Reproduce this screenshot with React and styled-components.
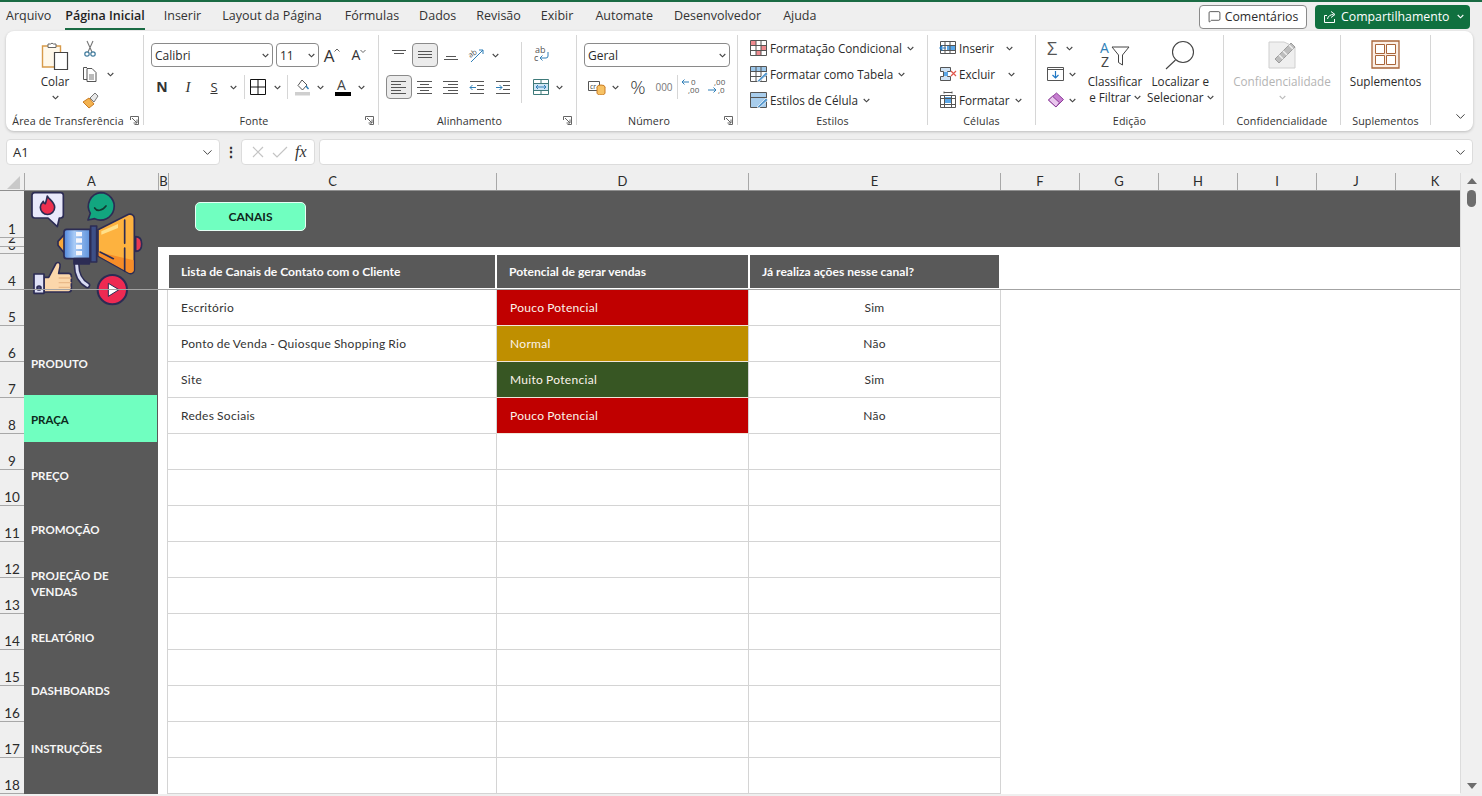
import React from 'react';
import styled, { createGlobalStyle } from 'styled-components';
import { MessageSquare, ChevronDown } from 'lucide-react';

const UI_FONT = '"Open Sans", "Noto Sans", sans-serif';
const CELL_FONT = 'Lato, "Open Sans", sans-serif';
const DARK = '#595959';

const GlobalStyle = createGlobalStyle`
  html, body { margin: 0; padding: 0; overflow: hidden; }
  body { background: #efefef; font-family: ${UI_FONT}; color: #2b2b2b; }
`;

const Page = styled.div`
  width: 1482px;
  height: 796px;
  overflow: hidden;
  border-top: 2px solid #1a6b44;
  box-sizing: border-box;
  background: #efefef;
`;

/* ---------- abas ---------- */
const TabBar = styled.div`
  height: 29px;
  display: flex;
  align-items: center;
  padding: 0 12px 0 6px;
`;
const Tab = styled.div`
  font-size: 12.5px;
  line-height: 24px;
  margin-right: ${(p) => p.$gap}px;
  color: ${(p) => (p.$active ? '#1f1f1f' : '#333')};
  font-weight: ${(p) => (p.$active ? 600 : 400)};
  border-bottom: 2px solid ${(p) => (p.$active ? '#1a6b44' : 'transparent')};
  white-space: nowrap;
`;
const TabActions = styled.div`
  margin-left: auto;
  display: flex;
  gap: 8px;
`;
const CommentButton = styled.div`
  width: 108px;
  height: 24px;
  box-sizing: border-box;
  border: 1px solid #8a8a8a;
  border-radius: 4px;
  background: #fff;
  display: flex;
  align-items: center;
  justify-content: center;
  gap: 4px;
  font-size: 12.3px;
`;
const ShareButton = styled.div`
  width: 155px;
  height: 24px;
  border-radius: 4px;
  background: #10703f;
  color: #fff;
  display: flex;
  align-items: center;
  justify-content: space-between;
  padding: 0 6px 0 8px;
  box-sizing: border-box;
  font-size: 12.3px;
`;
const ShareLabel = styled.span`
  display: flex;
  align-items: center;
  gap: 4px;
`;

/* ---------- faixa de opções ---------- */
const Ribbon = styled.div`
  margin: 0 9px 0 6px;
  height: 100px;
  box-sizing: border-box;
  padding: 4px 0 6px;
  background: #fff;
  border-radius: 8px;
  box-shadow: 0 1px 3px rgba(0, 0, 0, 0.22);
  display: flex;
  font-size: 11.7px;
`;
const Group = styled.div`
  position: relative;
  flex: 0 0 ${(p) => p.$w}px;
  box-sizing: border-box;
  border-right: ${(p) => (p.$last ? 'none' : '1px solid #d6d6d6')};
  display: flex;
  flex-direction: column;
`;
const GroupBody = styled.div`
  flex: 0 0 ${(p) => p.$h || 78}px;
  box-sizing: border-box;
  padding: ${(p) => p.$pt || 0}px 0 0 ${(p) => p.$pl || 0}px;
  display: flex;
  flex-direction: ${(p) => p.$dir || 'row'};
`;
const Caption = styled.div`
  font-size: 10.7px;
  line-height: 16px;
  text-align: center;
  color: #333;
  padding: 0 ${(p) => p.$pr || 0}px 0 ${(p) => p.$pl || 0}px;
  white-space: nowrap;
  letter-spacing: 0.1px;
`;
const Launcher = styled.svg`
  position: absolute;
  right: 4px;
  bottom: 0;
  width: 9px;
  height: 9px;
`;
const Row = styled.div`
  display: flex;
  align-items: center;
  height: ${(p) => p.$h || 32}px;
  padding-left: ${(p) => p.$pl || 0}px;
`;
const Stack = styled.div`
  display: flex;
  flex-direction: column;
  flex: 0 0 ${(p) => (p.$w ? `${p.$w}px` : 'auto')};
  margin-left: ${(p) => p.$ml || 0}px;
`;
const Cell = styled.div`
  flex: 0 0 ${(p) => p.$w}px;
  height: 24px;
  margin-left: ${(p) => p.$ml || 0}px;
  box-sizing: border-box;
  display: flex;
  align-items: center;
  justify-content: center;
  border-radius: 4px;
  ${(p) => p.$pressed && 'background: #ebebeb; border: 1px solid #8a8a8a;'}
`;
const VRule = styled.div`
  flex: 0 0 1px;
  align-self: ${(p) => (p.$full ? 'stretch' : 'center')};
  height: ${(p) => (p.$full ? 'auto' : '24px')};
  margin: ${(p) => (p.$full ? '3px 0 10px' : `0 0 0 ${p.$ml || 0}px`)};
  background: #d6d6d6;
`;
const Select = styled.div`
  flex: 0 0 ${(p) => p.$w}px;
  height: 24px;
  margin-left: ${(p) => p.$ml || 0}px;
  box-sizing: border-box;
  border: 1px solid #8a8a8a;
  border-radius: 4px;
  display: flex;
  align-items: center;
  justify-content: space-between;
  padding: 0 3px;
  font-size: 12px;
`;
const Tall = styled.div`
  flex: 0 0 ${(p) => p.$w}px;
  display: flex;
  flex-direction: column;
  align-items: center;
  color: ${(p) => (p.$muted ? '#b4b4b4' : '#2b2b2b')};
`;
const TallIcon = styled.div`
  height: 38px;
  box-sizing: border-box;
  padding-top: ${(p) => p.$pt || 5}px;
  display: flex;
  align-items: flex-start;
  justify-content: center;
`;
const TallLine = styled.div`
  line-height: 16px;
  height: 16px;
  display: flex;
  align-items: center;
  gap: 3px;
  white-space: nowrap;
`;
const ListRow = styled.div`
  display: flex;
  align-items: center;
  height: 26px;
  gap: 2px;
  white-space: nowrap;
`;
const ChevGap = styled.span`
  display: flex;
  margin-left: ${(p) => p.$ml}px;
`;
const Glyph = styled.span`
  font-family: ${(p) => p.$family || UI_FONT};
  font-size: ${(p) => p.$size || 14}px;
  font-weight: ${(p) => p.$weight || 400};
  font-style: ${(p) => (p.$italic ? 'italic' : 'normal')};
  text-decoration: ${(p) => (p.$under ? 'underline' : 'none')};
  color: ${(p) => p.$color || '#333'};
  line-height: 1;
`;
const CaretGlyph = styled.span`
  position: relative;
  display: inline-flex;
  padding-right: 6px;
  & > svg {
    position: absolute;
    right: 0;
    top: 1px;
  }
`;

/* ---------- barra de fórmulas ---------- */
const FormulaBar = styled.div`
  margin-top: 8px;
  height: 26px;
  padding: 0 9px 0 6px;
  display: flex;
  align-items: center;
`;
const FormulaBox = styled.div`
  flex: ${(p) => (p.$w ? `0 0 ${p.$w}px` : '1')};
  height: 26px;
  margin-left: ${(p) => p.$ml || 0}px;
  box-sizing: border-box;
  background: #fff;
  border: 1px solid #dcdcdc;
  border-radius: 4px;
  display: flex;
  align-items: center;
  justify-content: ${(p) => p.$justify || 'space-between'};
  padding: 0 4px 0 6px;
  font-size: 13px;
`;
const Kebab = styled.div`
  flex: 0 0 21px;
  text-align: center;
  font-size: 14px;
  font-weight: 700;
  line-height: 26px;
`;

/* ---------- planilha ---------- */
const Workbook = styled.div`
  margin-top: 8px;
  display: flex;
`;
const SheetArea = styled.div`
  width: 1460px;
  flex: none;
`;
const ColHeaders = styled.div`
  display: flex;
  height: 17px;
  box-sizing: border-box;
  overflow: hidden;
`;
const Corner = styled.div`
  flex: 0 0 24px;
  display: flex;
  align-items: flex-end;
  justify-content: flex-end;
  padding: 0 4px 1px 0;
  box-sizing: border-box;
`;
const ColHead = styled.div`
  flex: 0 0 ${(p) => p.$w}px;
  box-sizing: border-box;
  border-left: 1px solid #a8a8a8;
  font-family: ${CELL_FONT};
  font-size: 13px;
  line-height: 17px;
  text-align: center;
  color: #2b2b2b;
  overflow: hidden;
`;
const SheetBody = styled.div`
  position: relative;
  display: flex;
  height: 603px;
  overflow: hidden;
  border-top: 1px solid #8f8f8f;
  &::after {
    content: '';
    position: absolute;
    left: 0;
    right: 0;
    top: 98px;
    height: 1px;
    background: #a3a3a3;
    z-index: 3;
  }
`;
const RowHeads = styled.div`
  flex: 0 0 24px;
  display: flex;
  flex-direction: column;
`;
const RowHead = styled.div`
  flex: 0 0 ${(p) => p.$h}px;
  box-sizing: border-box;
  border-bottom: 1px solid #a8a8a8;
  font-family: ${CELL_FONT};
  font-size: 13.5px;
  line-height: 16px;
  color: #2b2b2b;
  display: flex;
  align-items: flex-end;
  justify-content: center;
  overflow: hidden;
`;
const Canvas = styled.div`
  position: relative;
  flex: 1;
  display: flex;
  flex-direction: column;
`;
const Band = styled.div`
  flex: 0 0 56px;
  background: ${DARK};
  display: flex;
  align-items: center;
  padding: 0 0 6px 171px;
  box-sizing: border-box;
`;
const CanaisButton = styled.div`
  width: 111px;
  height: 29px;
  box-sizing: border-box;
  background: #70ffc0;
  border: 1px solid #e6fff5;
  border-radius: 5px;
  color: #10261c;
  font-family: ${CELL_FONT};
  font-size: 12px;
  font-weight: 700;
  display: flex;
  align-items: center;
  justify-content: center;
`;
const LogoArt = styled.svg`
  position: absolute;
  left: 0;
  top: -3px;
  z-index: 2;
`;
const Lower = styled.div`
  flex: 1;
  display: flex;
  min-height: 0;
`;
const Sidebar = styled.div`
  flex: 0 0 134px;
  background: ${DARK};
  padding-top: 92px;
  box-sizing: border-box;
`;
const NavItem = styled.div`
  height: 47px;
  width: 133px;
  margin-top: ${(p) => p.$gap}px;
  padding: 3px 7px 0;
  box-sizing: border-box;
  display: flex;
  align-items: center;
  background: ${(p) => (p.$active ? '#70ffc0' : 'transparent')};
  color: ${(p) => (p.$active ? '#0c2a1c' : '#f6f6f6')};
  font-family: ${CELL_FONT};
  font-size: 11.5px;
  line-height: 16px;
  font-weight: 700;
`;
const Main = styled.div`
  flex: 1;
  background: #fff;
  padding: 8px 0 0 9px;
`;
const TableHead = styled.div`
  display: grid;
  grid-template-columns: 329px 252px 252px;
  width: 833px;
  height: 35px;
`;
const HeadCell = styled.div`
  height: 33px;
  margin: 0 ${(p) => p.$mr}px 0 ${(p) => p.$ml}px;
  background: ${DARK};
  color: #fbfbfb;
  font-family: ${CELL_FONT};
  font-size: 12.1px;
  font-weight: 700;
  padding-left: 12px;
  display: flex;
  align-items: center;
  white-space: nowrap;
`;
const TableBody = styled.div`
  display: grid;
  grid-template-columns: 329px 252px 252px;
  grid-auto-rows: 36px;
  width: 834px;
  border-right: 1px solid #d4d4d4;
  box-sizing: border-box;
`;
const BodyCell = styled.div`
  box-sizing: border-box;
  border-left: 1px solid #d4d4d4;
  border-bottom: 1px solid ${(p) => (p.$fill ? '#f0e6d8' : '#d4d4d4')};
  background: ${(p) => p.$fill || '#fff'};
  color: ${(p) => (p.$fill ? '#fbf3ea' : '#333')};
  font-family: ${CELL_FONT};
  font-size: 12px;
  letter-spacing: 0.3px;
  word-spacing: -0.5px;
  padding-left: ${(p) => (p.$center ? 0 : 13)}px;
  display: flex;
  align-items: center;
  justify-content: ${(p) => (p.$center ? 'center' : 'flex-start')};
  white-space: nowrap;
`;
const Scrollbar = styled.div`
  flex: 0 0 22px;
  height: 620px;
  border-left: 1px solid #dcdcdc;
  box-sizing: border-box;
  background: #f0f0f0;
  display: flex;
  flex-direction: column;
  align-items: center;
  padding: 4px 0 3px 0;
`;
const ScrollThumb = styled.div`
  width: 9px;
  height: 17px;
  margin-top: 5px;
  border-radius: 5px;
  background: #6d6d6d;
`;
const ScrollDown = styled.div`
  margin-top: auto;
  display: flex;
`;

/* ---------- ícones ---------- */
const Chev = ({ color = '#444' }) => (
  <svg width="7" height="5" viewBox="0 0 7 5"><path d="M.7 1l2.8 2.8L6.3 1" fill="none" stroke={color} strokeWidth="1.1" /></svg>
);
const Svg = ({ w = 18, h = 18, children }) => (
  <svg width={w} height={h} viewBox={`0 0 ${w} ${h}`} fill="none">{children}</svg>
);
const Caret = ({ up }) => (
  <svg width="6" height="4" viewBox="0 0 6 4"><path d={up ? 'M.5 3.500L3 1l2.500 2.500' : 'M.5 1L3 3.500 5.500 1'} fill="none" stroke="#666" /></svg>
);

const PasteIcon = () => (
  <Svg w={30} h={31}>
    <path d="M2.500 6h18v21h-18z" fill="#fff8ea" stroke="#d79a4a" strokeWidth="1.400" />
    <path d="M8 6V4h2.500a2 2 0 0 1 3 0H16v3.500H8z" fill="#fff" stroke="#666" />
    <path d="M14.500 12.500h13v17h-13z" fill="#fff" stroke="#444" strokeWidth="1.200" />
  </Svg>
);
const ScissorsIcon = () => (
  <Svg>
    <path d="M6 2l5 11M12 2L7 13" stroke="#777" strokeWidth="1.100" />
    <circle cx="6" cy="15" r="2.200" stroke="#3f7a9c" strokeWidth="1.200" />
    <circle cx="12" cy="15" r="2.200" stroke="#3f7a9c" strokeWidth="1.200" />
  </Svg>
);
const CopyIcon = () => (
  <Svg>
    <path d="M6 2.500H2.500v12H6" stroke="#555" />
    <path d="M6 3.500h5l4 4v9H6z" fill="#fff" stroke="#555" />
    <path d="M8 10h5M8 12h5M8 14h5" stroke="#777" />
  </Svg>
);
const BrushIcon = () => (
  <Svg>
    <path d="M2 11l6-4 5 6-5 4z" fill="#f3b24f" stroke="#c97b22" />
    <path d="M9 7l5-5 3 3-4 6z" fill="#e8e8e8" stroke="#777" />
  </Svg>
);
const BordersIcon = () => (
  <Svg w={16} h={16}>
    <path d="M.5.5h15v15H.5zM8 .5v15M.5 8h15" stroke="#111" />
  </Svg>
);
const FillIcon = () => (
  <Svg w={17} h={17}>
    <path d="M8 1l5 5-4.500 5L4 6.500z" stroke="#555" fill="#fff" />
    <path d="M12 7l2.500 3" stroke="#2f7fb8" strokeWidth="1.400" />
    <path d="M1 13h15v3.500H1z" fill="#cfcfcf" />
  </Svg>
);
const AlignIcon = ({ lines, color = '#555', w = 16 }) => (
  <Svg w={w} h={16}>
    {lines.map(([x, y, len], i) => (
      <path key={i} d={`M${x} ${y}.5h${len}`} stroke={color} />
    ))}
  </Svg>
);
const IndentIcon = ({ out }) => (
  <Svg w={16} h={16}>
    <path d="M1 2.500h14M8 6.500h7M8 10.500h7M1 14.500h14" stroke="#555" />
    <path d={out ? 'M7 8.500H1m2.500-2.500L1 8.500 3.500 11' : 'M1 8.500h6M4.500 6L7 8.500 4.500 11'} stroke="#2f7fb8" />
  </Svg>
);
const OrientationIcon = () => (
  <Svg w={18} h={16}>
    <text x="1" y="9" fontSize="7.500" fill="#555" fontFamily="Open Sans" transform="rotate(-35 5 8)">ab</text>
    <path d="M3 15L15 3m-4 0h4v4" stroke="#2f7fb8" />
  </Svg>
);
const WrapIcon = () => (
  <Svg w={18} h={20}>
    <text x="3" y="8" fontSize="9" fill="#555" fontFamily="Open Sans">ab</text>
    <text x="2" y="16" fontSize="9" fill="#555" fontFamily="Open Sans">c</text>
    <path d="M16 7v4a2 2 0 0 1-2 2H8m2.500-2.500L8 13l2.500 2.500" stroke="#2f7fb8" />
  </Svg>
);
const MergeIcon = () => (
  <Svg w={16} h={16}>
    <path d="M.5.5h15v15H.5zM.5 4.500h15M.5 11.500h15M8 .5v4M8 11.500v4" stroke="#3f7a7a" />
    <path d="M1 5h14v6H1z" fill="#cfe6f5" />
    <path d="M3 8h10M5 6L3 8l2 2M11 6l2 2-2 2" stroke="#2f7fb8" />
  </Svg>
);
const AccountingIcon = () => (
  <Svg w={18} h={16}>
    <path d="M.5 2.500h11v9H.5z" stroke="#555" />
    <text x="2" y="9.500" fontSize="7" fill="#444" fontFamily="Open Sans">cr</text>
    <ellipse cx="13" cy="8" rx="4" ry="2" fill="#f7c264" stroke="#c97b22" />
    <path d="M9 8v6c0 2.600 8 2.600 8 0V8" fill="#f7c264" stroke="#c97b22" />
  </Svg>
);
const DecimalIcon = ({ more }) => (
  <Svg w={22} h={20}>
    <text x={more ? 11 : 8} y="8" fontSize="8" fill="#555" fontFamily="Open Sans">{more ? '0' : ',00'}</text>
    <text x={more ? 8 : 12} y="16" fontSize="8" fill="#555" fontFamily="Open Sans">{more ? ',00' : ',0'}</text>
    <path d={more ? 'M9 5H2m2.500-2.500L2 5l2.500 2.500' : 'M2 13h8M7.500 10.500L10 13l-2.500 2.500'} stroke="#2f7fb8" />
  </Svg>
);
const CondIcon = () => (
  <Svg>
    <path d="M1 2h5v5H1zM6 12h5v4H6z" fill="#ee8a8f" />
    <path d="M11 7h5v5h-5z" fill="#ee8a8f" />
    <path d="M.5 1.500h16v15H.5zM.5 6.500h16M.5 11.500h16M6 1.500v15M11 1.500v15" stroke="#555" />
  </Svg>
);
const TableFmtIcon = () => (
  <Svg>
    <path d="M1 2h15v4H1z" fill="#9cc7ea" />
    <path d="M.5 1.500h16v15H.5zM.5 6.500h16M.5 11.500h16M6 1.500v15M11 1.500v15" stroke="#555" />
    <path d="M7 16l9-9 2 2-9 8z" fill="#5a9bd0" stroke="#fff" strokeWidth=".7" />
  </Svg>
);
const CellStyleIcon = () => (
  <Svg>
    <path d="M1 2h15v14H1z" fill="#a8cdec" />
    <path d="M.5 1.500h16v15H.5zM.5 6.500h16" stroke="#555" />
    <path d="M7 16l9-9 2 2-9 8z" fill="#5a9bd0" stroke="#fff" strokeWidth=".7" />
  </Svg>
);
const InsertIcon = () => (
  <Svg>
    <path d="M8 6h8v6H8z" fill="#5aa7e8" />
    <path d="M1.500 2.500h15v12h-15zM1.500 6.500h15M1.500 11.500h15M6 2.500v12M11 2.500v12" stroke="#555" />
    <path d="M7 9H1m2.500-2.500L1 9l2.500 2.500" stroke="#1f77c4" strokeWidth="1.200" />
  </Svg>
);
const DeleteIcon = () => (
  <Svg>
    <path d="M1.500 2.500h10v4h-3v5h3v4h-10v-4h3v-5h-3z" fill="#cfe3f5" stroke="#555" />
    <path d="M5 7h4v4H5z" fill="#5aa7e8" />
    <path d="M12 6l5 5M17 6l-5 5" stroke="#e2574c" strokeWidth="1.200" />
  </Svg>
);
const FormatCellIcon = () => (
  <Svg>
    <path d="M5 6h8v6H5z" fill="#5aa7e8" />
    <path d="M1.500 4.500h15v12h-15zM1.500 7.500h15M1.500 13.500h15M5.500 4.500v12M12.500 4.500v12" stroke="#555" />
    <path d="M5 1.500h8M5 .5v2M13 .5v2" stroke="#555" />
  </Svg>
);
const FillDownIcon = () => (
  <Svg w={18} h={16}>
    <path d="M.5 1.500h16v13H.5zM.5 3.500h16" stroke="#555" />
    <path d="M8.500 5v7M5.500 9l3 3 3-3" stroke="#1f77c4" strokeWidth="1.200" />
  </Svg>
);
const EraserIcon = () => (
  <Svg w={18} h={16}>
    <path d="M9.500 1l7 6.500-7.500 7.500L1.500 8z" fill="#c77fd0" stroke="#8c3d99" />
    <path d="M5.500 4.200l7 6.500L9 15 1.500 8z" fill="#e9c7ed" stroke="#8c3d99" />
  </Svg>
);
const SortIcon = () => (
  <Svg w={32} h={32}>
    <text x="1" y="13" fontSize="14" fill="#2f7fb8" fontFamily="Open Sans">A</text>
    <text x="2" y="27" fontSize="14" fill="#444" fontFamily="Open Sans">Z</text>
    <path d="M13 7h17l-6.500 8v10l-4-2.500V15z" fill="#fff" stroke="#444" />
  </Svg>
);
const FindIcon = () => (
  <Svg w={32} h={30}>
    <circle cx="19" cy="12" r="10.500" stroke="#444" strokeWidth="1.100" />
    <path d="M11.500 20L2 29" stroke="#444" strokeWidth="1.100" />
  </Svg>
);
const ConfidentialIcon = () => (
  <Svg w={30} h={30}>
    <path d="M2 2h15l11 5v21H2z" fill="#efefef" stroke="#cfcfcf" />
    <path d="M8 19L24 3l4 4-16 16z" fill="#bdbdbd" stroke="#9d9d9d" />
    <path d="M12 15l4 4M16 11l4 4M22 5l4 4" stroke="#eee" strokeWidth="1.500" />
  </Svg>
);
const AddinsIcon = () => (
  <Svg w={30} h={30}>
    <path d="M1 1h27v27H1z" fill="#fbefe6" stroke="#a9653a" strokeWidth="1.300" />
    <path d="M4.500 4.500h9v9h-9zM15.500 4.500h9v9h-9zM4.500 15.500h9v9h-9zM15.500 15.500h9v9h-9z" fill="#fff" stroke="#a9653a" />
  </Svg>
);
const ShareIcon = () => (
  <Svg w={14} h={14}>
    <path d="M4 5.500H1.500v7h10V9" stroke="#fff" />
    <path d="M4.500 9c.5-3 3-4.500 6-4.500M8 1.500l4 3-4 3" stroke="#fff" />
  </Svg>
);
const FontColorMark = () => (
  <Svg w={18} h={18}>
    <text x="3" y="12" fontSize="14" fill="#444" fontFamily="Open Sans">A</text>
    <path d="M1 14h16v4H1z" fill="#000" />
  </Svg>
);
const LauncherMark = () => (
  <Launcher viewBox="0 0 9 9" fill="none">
    <path d="M.5 4V.5H8.500V8.500H4.500" stroke="#666" />
    <path d="M2 2l5 5M7 3.500V7H3.500" stroke="#666" />
  </Launcher>
);
const LogoImage = () => (
  <LogoArt width="136" height="122" viewBox="0 0 408 366">
    <defs>
      <linearGradient id="logoBody" x1="0" x2="1" y1="0" y2="0">
        <stop offset="0" stopColor="#4f86dc" />
        <stop offset="0.4" stopColor="#a9cbf6" />
        <stop offset="1" stopColor="#5f93dc" />
      </linearGradient>
    </defs>
    <g stroke="#2c2c54" strokeWidth="5" strokeLinejoin="round" strokeLinecap="round">
      <path d="M32 14h78a8 8 0 0 1 8 8v60a8 8 0 0 1-8 8h-4l-6 26-28-26H32a8 8 0 0 1-8-8V22a8 8 0 0 1 8-8z" fill="#e9e9fb" />
      <path d="M70 24c4 10 22 18 22 34a21 21 0 0 1-43 0c0-9 5-14 9-18 1 5 3 7 6 7 3-7 4-14 6-23z" fill="#ee2f4f" />
      <path d="M230 14a41 41 0 1 1-18 78l-20 4 7-20a41 41 0 0 1 31-62z" fill="#12a67f" />
      <path d="M212 60c6 10 22 10 34-6" fill="none" stroke="#123c33" />
      <path d="M335 146c14 0 18 12 18 22s-4 22-18 22z" fill="#e93a55" />
      <path d="M222 125l92-46c8-3 17 3 17 12v155c0 8-8 13-16 10l-93-52z" fill="#fdb23f" />
      <path d="M224 192l105 25v30c0 6-8 10-15 7l-90-50z" fill="#f78d28" stroke="none" />
      <path d="M302 96v70M302 180v70M228 192l40 20" fill="none" />
      <path d="M158 230c0 30 12 50 32 62" fill="none" stroke="#2c2c54" strokeWidth="18" />
      <path d="M158 230c0 30 12 50 32 62" fill="none" stroke="#d9dcf3" strokeWidth="9" />
      <path d="M128 132l-26 28v12l26 32z" fill="#f9a93a" />
      <path d="M128 124h70v88h-70a8 8 0 0 1-8-8v-72a8 8 0 0 1 8-8z" fill="url(#logoBody)" />
      <path d="M150 212h46v16h-46z" fill="#2c2c54" />
      <path d="M200 114h18v108h-18z" fill="#3d4f86" />
    </g>
    <path d="M156 132h18v13h-18zM156 151h18v13h-18zM156 170h18v13h-18zM156 189h18v13h-18z" fill="#f5f5fb" />
    <path d="M232 130l50-22v12l-50 20z" fill="#ffe08a" />
    <g stroke="#2c2c54" strokeWidth="5" strokeLinejoin="round">
      <path d="M60 268h14l22-42c8-6 14 0 12 10l-4 20h30a8 8 0 0 1 8 8v40a8 8 0 0 1-8 8H74H60z" fill="#fbd7ab" />
      <path d="M30 258h30v58H30z" fill="#dfe1f6" />
      <circle cx="45" cy="300" r="6" fill="#4a4a7c" />
    </g>
    <path d="M104 270h38M104 284h38M104 298h36" stroke="#e9b989" strokeWidth="4" />
    <circle cx="265" cy="305" r="44" fill="#ee2a52" stroke="#2c2c54" strokeWidth="6" />
    <path d="M253 286l32 19-32 20z" fill="#fff" stroke="#2c2c54" strokeWidth="3" strokeLinejoin="round" />
  </LogoArt>
);

/* ---------- dados ---------- */
const tabs = [
  ['Arquivo', 14], ['Página Inicial', 19, true], ['Inserir', 21], ['Layout da Página', 23], ['Fórmulas', 20],
  ['Dados', 20], ['Revisão', 20], ['Exibir', 22], ['Automate', 21], ['Desenvolvedor', 22], ['Ajuda', 0],
];
const columns = [['A', 134], ['B', 10], ['C', 328], ['D', 252], ['E', 252], ['F', 79], ['G', 79], ['H', 79], ['I', 79], ['J', 79], ['K', 79]];
const rowHeights = [47, 9, 7, 36, ...Array(14).fill(36)];
const navItems = [
  ['PRODUTO', 0], ['PRAÇA', 9, true], ['PREÇO', 9], ['PROMOÇÃO', 7], ['PROJEÇÃO DE VENDAS', 7],
  ['RELATÓRIO', 7], ['DASHBOARDS', 6], ['INSTRUÇÕES', 11],
];
const rows = [
  ['Escritório', 'Pouco Potencial', '#c00000', 'Sim'],
  ['Ponto de Venda - Quiosque Shopping Rio', 'Normal', '#bf8f00', 'Não'],
  ['Site', 'Muito Potencial', '#375623', 'Sim'],
  ['Redes Sociais', 'Pouco Potencial', '#c00000', 'Não'],
  ...Array(10).fill(['', '', '', '']),
];
const alignLines = {
  top: [[1, 3, 14], [3, 6, 10]],
  middle: [[1, 4, 14], [1, 7, 14], [1, 10, 14]],
  bottom: [[3, 9, 10], [1, 12, 14]],
  left: [[0, 2, 15], [0, 5, 10], [0, 8, 15], [0, 11, 10], [0, 14, 15]],
  center: [[0, 2, 15], [3, 5, 9], [0, 8, 15], [3, 11, 9], [0, 14, 15]],
  right: [[0, 2, 15], [5, 5, 10], [0, 8, 15], [5, 11, 10], [0, 14, 15]],
};

function RibbonBar() {
  return (
    <Ribbon>
      <Group $w={138}>
        <GroupBody $pl={27}>
          <Tall $w={44}>
            <TallIcon><PasteIcon /></TallIcon>
            <TallLine>Colar</TallLine>
            <TallLine><Chev /></TallLine>
          </Tall>
          <Stack $ml={4}>
            <ListRow><ScissorsIcon /></ListRow>
            <ListRow><CopyIcon /><ChevGap $ml={6}><Chev /></ChevGap></ListRow>
            <ListRow><BrushIcon /></ListRow>
          </Stack>
        </GroupBody>
        <Caption $pr={13}>Área de Transferência</Caption>
        <LauncherMark />
      </Group>
      <Group $w={235}>
        <GroupBody $pt={4} $dir="column">
          <Row $pl={7}>
            <Select $w={122}>Calibri<Chev /></Select>
            <Select $w={43} $ml={3}>11<Chev /></Select>
            <Cell $w={26}><CaretGlyph><Glyph $size={17}>A</Glyph><Caret up /></CaretGlyph></Cell>
            <Cell $w={28}><CaretGlyph><Glyph $size={14}>A</Glyph><Caret /></CaretGlyph></Cell>
          </Row>
          <Row $pl={5}>
            <Cell $w={26}><Glyph $weight={700} $size={14}>N</Glyph></Cell>
            <Cell $w={26}><Glyph $italic $family="Liberation Serif" $size={15}>I</Glyph></Cell>
            <Cell $w={26}><Glyph $under $size={13}>S</Glyph></Cell>
            <Cell $w={12}><Chev /></Cell>
            <VRule $ml={5} />
            <Cell $w={18} $ml={4}><BordersIcon /></Cell>
            <Cell $w={20}><Chev /></Cell>
            <VRule />
            <Cell $w={28}><FillIcon /></Cell>
            <Cell $w={8}><Chev /></Cell>
            <Cell $w={24} $ml={7}><FontColorMark /></Cell>
            <Cell $w={12}><Chev /></Cell>
          </Row>
        </GroupBody>
        <Caption $pr={14}>Fonte</Caption>
        <LauncherMark />
      </Group>
      <Group $w={198}>
        <GroupBody $pt={4} $pl={7}>
          <Stack $w={135}>
            <Row>
              <Cell $w={26}><AlignIcon lines={alignLines.top} /></Cell>
              <Cell $w={26} $pressed><AlignIcon lines={alignLines.middle} /></Cell>
              <Cell $w={26}><AlignIcon lines={alignLines.bottom} /></Cell>
              <Cell $w={26}><OrientationIcon /></Cell>
              <Cell $w={10}><Chev /></Cell>
            </Row>
            <Row>
              <Cell $w={26} $pressed><AlignIcon lines={alignLines.left} /></Cell>
              <Cell $w={26}><AlignIcon lines={alignLines.center} /></Cell>
              <Cell $w={26}><AlignIcon lines={alignLines.right} /></Cell>
              <Cell $w={26}><IndentIcon out /></Cell>
              <Cell $w={26}><IndentIcon /></Cell>
            </Row>
          </Stack>
          <VRule $full />
          <Stack>
            <Row><Cell $w={38}><WrapIcon /></Cell></Row>
            <Row><Cell $w={30} $ml={4}><MergeIcon /></Cell><Cell $w={6}><Chev /></Cell></Row>
          </Stack>
        </GroupBody>
        <Caption $pr={16}>Alinhamento</Caption>
        <LauncherMark />
      </Group>
      <Group $w={161}>
        <GroupBody $pt={4} $dir="column">
          <Row $pl={7}><Select $w={146}>Geral<Chev /></Select></Row>
          <Row $pl={7}>
            <Cell $w={26}><AccountingIcon /></Cell>
            <Cell $w={10}><Chev /></Cell>
            <Cell $w={26} $ml={5}><Glyph $size={19} $weight={300}>%</Glyph></Cell>
            <Cell $w={26}><Glyph $size={10} $color="#777">000</Glyph></Cell>
            <VRule />
            <Cell $w={26}><DecimalIcon more /></Cell>
            <Cell $w={26}><DecimalIcon /></Cell>
          </Row>
        </GroupBody>
        <Caption $pr={16}>Número</Caption>
        <LauncherMark />
      </Group>
      <Group $w={190}>
        <GroupBody $pl={12} $dir="column">
          <ListRow><CondIcon />Formatação Condicional<ChevGap $ml={3}><Chev /></ChevGap></ListRow>
          <ListRow><TableFmtIcon />Formatar como Tabela<ChevGap $ml={3}><Chev /></ChevGap></ListRow>
          <ListRow><CellStyleIcon />Estilos de Célula<ChevGap $ml={3}><Chev /></ChevGap></ListRow>
        </GroupBody>
        <Caption>Estilos</Caption>
      </Group>
      <Group $w={108}>
        <GroupBody $pl={11} $dir="column">
          <ListRow><InsertIcon />Inserir<ChevGap $ml={10}><Chev /></ChevGap></ListRow>
          <ListRow><DeleteIcon />Excluir<ChevGap $ml={11}><Chev /></ChevGap></ListRow>
          <ListRow><FormatCellIcon />Formatar<ChevGap $ml={3}><Chev /></ChevGap></ListRow>
        </GroupBody>
        <Caption>Células</Caption>
      </Group>
      <Group $w={188}>
        <GroupBody $pl={11}>
          <Stack $w={36}>
            <ListRow><Glyph $size={18} $color="#555">Σ</Glyph><ChevGap $ml={7}><Chev /></ChevGap></ListRow>
            <ListRow><FillDownIcon /><ChevGap $ml={2}><Chev /></ChevGap></ListRow>
            <ListRow><EraserIcon /><ChevGap $ml={2}><Chev /></ChevGap></ListRow>
          </Stack>
          <Tall $w={64}>
            <TallIcon><SortIcon /></TallIcon>
            <TallLine>Classificar</TallLine>
            <TallLine>e Filtrar<Chev /></TallLine>
          </Tall>
          <Tall $w={66}>
            <TallIcon><FindIcon /></TallIcon>
            <TallLine>Localizar e</TallLine>
            <TallLine>Selecionar<Chev /></TallLine>
          </Tall>
        </GroupBody>
        <Caption>Edição</Caption>
      </Group>
      <Group $w={117}>
        <GroupBody>
          <Tall $w={116} $muted>
            <TallIcon><ConfidentialIcon /></TallIcon>
            <TallLine>Confidencialidade</TallLine>
            <TallLine><Chev color="#bbb" /></TallLine>
          </Tall>
        </GroupBody>
        <Caption>Confidencialidade</Caption>
      </Group>
      <Group $w={90}>
        <GroupBody>
          <Tall $w={89}>
            <TallIcon><AddinsIcon /></TallIcon>
            <TallLine>Suplementos</TallLine>
          </Tall>
        </GroupBody>
        <Caption>Suplementos</Caption>
      </Group>
      <Group $w={42} $last>
        <GroupBody $h={74} />
        <Caption $pl={16}><ChevronDown size={15} strokeWidth={1.5} color="#333" /></Caption>
      </Group>
    </Ribbon>
  );
}

export default function App() {
  return (
    <Page>
      <GlobalStyle />
      <TabBar>
        {tabs.map(([label, gap, active]) => (
          <Tab key={label} $gap={gap} $active={active}>{label}</Tab>
        ))}
        <TabActions>
          <CommentButton><MessageSquare size={13} strokeWidth={1.4} />Comentários</CommentButton>
          <ShareButton>
            <ShareLabel><ShareIcon />Compartilhamento</ShareLabel>
            <Chev color="#fff" />
          </ShareButton>
        </TabActions>
      </TabBar>
      <RibbonBar />
      <FormulaBar>
        <FormulaBox $w={214}>A1<ChevronDown size={15} strokeWidth={1.4} /></FormulaBox>
        <Kebab>⋮</Kebab>
        <FormulaBox $w={74} $justify="space-around">
          <Svg w={14} h={14}><path d="M2 2l10 10M12 2L2 12" stroke="#c4c4c4" strokeWidth="1.200" /></Svg>
          <Svg w={16} h={14}><path d="M1 8l4 4L15 2" stroke="#c4c4c4" strokeWidth="1.200" /></Svg>
          <Glyph $family="Liberation Serif" $italic $size={16}>fx</Glyph>
        </FormulaBox>
        <FormulaBox $ml={4} $justify="flex-end"><ChevronDown size={15} strokeWidth={1.4} /></FormulaBox>
      </FormulaBar>
      <Workbook>
        <SheetArea>
          <ColHeaders>
            <Corner>
              <Svg w={13} h={13}><path d="M13 0v13H0z" fill="#c9c9c9" /></Svg>
            </Corner>
            {columns.map(([name, w]) => <ColHead key={name} $w={w}>{name}</ColHead>)}
          </ColHeaders>
          <SheetBody>
            <RowHeads>
              {rowHeights.map((h, i) => <RowHead key={i} $h={h}>{i + 1}</RowHead>)}
            </RowHeads>
            <Canvas>
              <LogoImage />
              <Band><CanaisButton>CANAIS</CanaisButton></Band>
              <Lower>
                <Sidebar>
                  {navItems.map(([label, gap, active]) => (
                    <NavItem key={label} $gap={gap} $active={active}>{label}</NavItem>
                  ))}
                </Sidebar>
                <Main>
                  <TableHead>
                    <HeadCell $ml={2} $mr={1}>Lista de Canais de Contato com o Cliente</HeadCell>
                    <HeadCell $ml={1} $mr={0}>Potencial de gerar vendas</HeadCell>
                    <HeadCell $ml={2} $mr={1}>Já realiza ações nesse canal?</HeadCell>
                  </TableHead>
                  <TableBody>
                    {rows.map(([name, level, fill, done], i) => (
                      <React.Fragment key={i}>
                        <BodyCell>{name}</BodyCell>
                        <BodyCell $fill={fill || undefined}>{level}</BodyCell>
                        <BodyCell $center>{done}</BodyCell>
                      </React.Fragment>
                    ))}
                  </TableBody>
                </Main>
              </Lower>
            </Canvas>
          </SheetBody>
        </SheetArea>
        <Scrollbar>
          <Svg w={12} h={8}><path d="M6 1l5 6H1z" fill="#6d6d6d" /></Svg>
          <ScrollThumb />
          <ScrollDown><Svg w={12} h={8}><path d="M6 7L1 1h10z" fill="#6d6d6d" /></Svg></ScrollDown>
        </Scrollbar>
      </Workbook>
    </Page>
  );
}
